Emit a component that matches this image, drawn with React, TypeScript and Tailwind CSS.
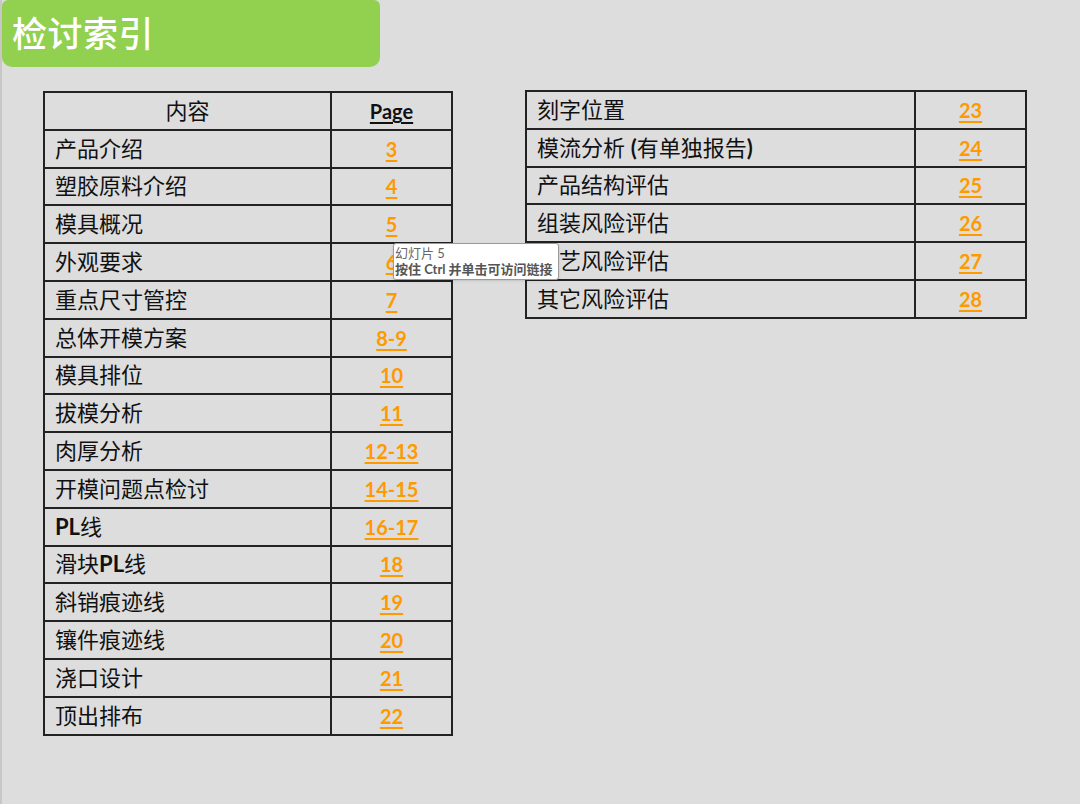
import React from 'react';

type Row = { title: React.ReactNode; page: string };

const leftRows: Row[] = [
  { title: '产品介绍', page: '3' },
  { title: '塑胶原料介绍', page: '4' },
  { title: '模具概况', page: '5' },
  { title: '外观要求', page: '6' },
  { title: '重点尺寸管控', page: '7' },
  { title: '总体开模方案', page: '8-9' },
  { title: '模具排位', page: '10' },
  { title: '拔模分析', page: '11' },
  { title: '肉厚分析', page: '12-13' },
  { title: '开模问题点检讨', page: '14-15' },
  { title: <><span className="font-bold">PL</span>线</>, page: '16-17' },
  { title: <>滑块<span className="font-bold">PL</span>线</>, page: '18' },
  { title: '斜销痕迹线', page: '19' },
  { title: '镶件痕迹线', page: '20' },
  { title: '浇口设计', page: '21' },
  { title: '顶出排布', page: '22' },
];

const rightRows: Row[] = [
  { title: '刻字位置', page: '23' },
  { title: <>模流分析 <span className="font-bold">(</span>有单独报告<span className="font-bold">)</span></>, page: '24' },
  { title: '产品结构评估', page: '25' },
  { title: '组装风险评估', page: '26' },
  { title: '工艺风险评估', page: '27' },
  { title: '其它风险评估', page: '28' },
];

const font = { fontFamily: 'Lato, "Noto Sans CJK SC", sans-serif' };

const PageLink: React.FC<{ page: string }> = ({ page }) => (
  <span className="text-[#ff9900] font-bold text-[20px] underline decoration-[#ff9900] underline-offset-[3px]">
    {page}
  </span>
);

const IndexTable: React.FC<{ rows: Row[]; header?: boolean; colA: string; colB: string }> = ({
  rows,
  header,
  colA,
  colB,
}) => (
  <table className="border-collapse border-2 border-black text-[#111]">
    <tbody>
      {header && (
        <tr className="h-[37.8px]">
          <td className={`${colA} border-2 border-[#222] text-center text-[22px] p-0`}>内容</td>
          <td className={`${colB} border-2 border-[#222] text-center p-0`}>
            <span className="font-bold text-[20px] underline underline-offset-[3px]">Page</span>
          </td>
        </tr>
      )}
      {rows.map((r, i) => (
        <tr key={i} className="h-[37.8px]">
          <td className={`${colA} border-2 border-[#222] pl-[10px] text-[22px] leading-none p-0`}>{r.title}</td>
          <td className={`${colB} border-2 border-[#222] text-center p-0`}>
            <PageLink page={r.page} />
          </td>
        </tr>
      ))}
    </tbody>
  </table>
);

export default function App() {
  return (
    <div
      className="relative w-[1080px] h-[804px] bg-[#dddddd] border-l-2 border-[#cbc6c6] overflow-hidden"
      style={font}
    >
      <div className="w-[378px] h-[67px] bg-[#92d050] rounded-b-[10px] rounded-t-[6px] flex items-center pl-[10px]">
        <h1 className="text-white text-[35px] font-medium tracking-[0.5px]">检讨索引</h1>
      </div>

      <div className="flex items-start mt-[24px]">
        <div className="ml-[41px]">
          <IndexTable rows={leftRows} header colA="w-[287px]" colB="w-[121px]" />
        </div>
        <div className="ml-[72px] -mt-px">
          <IndexTable rows={rightRows} colA="w-[389px]" colB="w-[111px]" />
        </div>
      </div>

      <div className="absolute left-[391px] top-[243px] w-[166px] h-[37px] bg-white border border-[#9a9a9a] rounded-[3px] shadow-sm pl-px pt-px text-[13px] leading-[16px]">
        <div className="text-[#666]">幻灯片 5</div>
        <div className="text-[#555] font-bold whitespace-nowrap">按住 Ctrl 并单击可访问链接</div>
      </div>
    </div>
  );
}
